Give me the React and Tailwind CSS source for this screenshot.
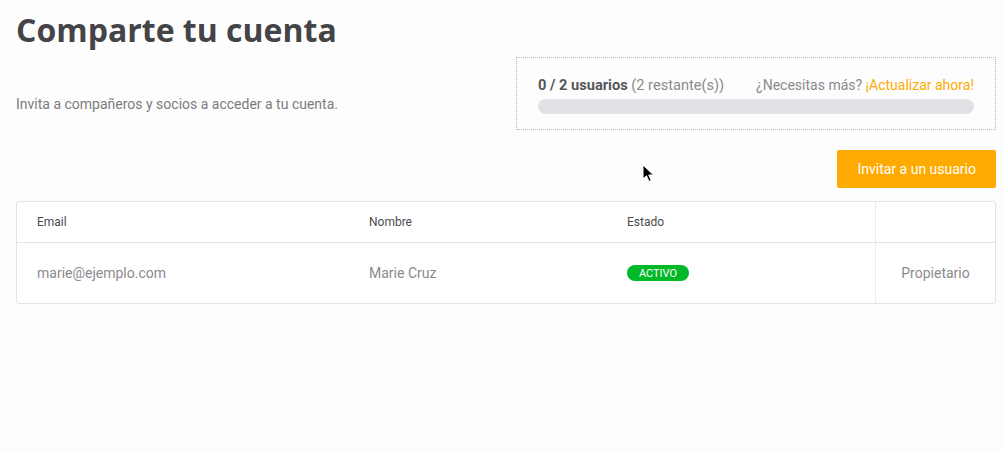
import React from 'react';

const Cursor = () => (
  <svg
    className="absolute left-[642px] top-[164px]"
    width="13"
    height="19"
    viewBox="0 0 13 19"
  >
    <path
      d="M1 1 L1 15 L4.5 11.8 L7 17.5 L9.2 16.5 L6.8 11 L11.5 11 Z"
      fill="#000"
      stroke="#fff"
      strokeWidth="1"
      strokeLinejoin="round"
    />
  </svg>
);

const UsageBox = () => (
  <div className="w-[480px] border border-dotted border-[#b5b5b5] px-[21px] pt-[17px] pb-[15px]">
    <div className="flex items-baseline justify-between text-[14px] leading-[20px]">
      <span className="text-[14.6px]">
        <span className="font-bold text-[#555559]">0 / 2 usuarios</span>{' '}
        <span className="text-[#8a8a8e]">(2 restante(s))</span>
      </span>
      <span>
        <span className="text-[#8a8a8e]">¿Necesitas más?</span>{' '}
        <span className="text-[#ffaa00]">¡Actualizar ahora!</span>
      </span>
    </div>
    <div className="mt-[4px] h-[15px] rounded-full bg-[#e1e1e6]" />
  </div>
);

const users = [
  { email: 'marie@ejemplo.com', name: 'Marie Cruz', status: 'Activo', role: 'Propietario' },
];

const UsersTable = () => (
  <div className="mt-[13px] rounded-[3px] border border-[#e3e3e6] bg-white">
    <div className="grid h-[41px] grid-cols-[331px_258px_269px_1fr] border-b border-[#e3e3e6] text-[12px] text-[#4a4a50]">
      <div className="flex items-center pl-[20px]">Email</div>
      <div className="flex items-center pl-[21px]">Nombre</div>
      <div className="flex items-center pl-[21px]">Estado</div>
      <div className="border-l border-[#ececee]" />
    </div>
    {users.map((u) => (
      <div
        key={u.email}
        className="grid h-[60px] grid-cols-[331px_258px_269px_1fr] text-[14px] text-[#8a8a8e]"
      >
        <div className="flex items-center pl-[20px]">{u.email}</div>
        <div className="flex items-center pl-[21px]">{u.name}</div>
        <div className="flex items-center pl-[21px]">
          <span className="flex h-[16px] w-[62px] items-center justify-center rounded-full bg-[#00b927] text-[11px] uppercase leading-none text-white">
            {u.status}
          </span>
        </div>
        <div className="flex items-center justify-center border-l border-[#ececee]">
          {u.role}
        </div>
      </div>
    ))}
  </div>
);

export default function App() {
  return (
    <div className="relative min-h-[451px] bg-[#fdfdfd] font-['Roboto',sans-serif]">
      <div className="ml-[16px] w-[980px] pt-[10px]">
        <h1 className="font-['Open_Sans',sans-serif] text-[32px] font-bold leading-[40px] text-[#444448]">
          Comparte tu cuenta
        </h1>
        <div className="mt-[7px] flex items-start justify-between">
          <p className="mt-[37px] text-[14px] leading-[20px] text-[#7b7b80]">
            Invita a compañeros y socios a acceder a tu cuenta.
          </p>
          <UsageBox />
        </div>
        <div className="mt-[20px] flex justify-end">
          <button className="h-[38px] rounded-[2px] bg-[#ffaa00] px-[20px] text-[14px] text-white">
            Invitar a un usuario
          </button>
        </div>
        <UsersTable />
      </div>
      <Cursor />
    </div>
  );
}
